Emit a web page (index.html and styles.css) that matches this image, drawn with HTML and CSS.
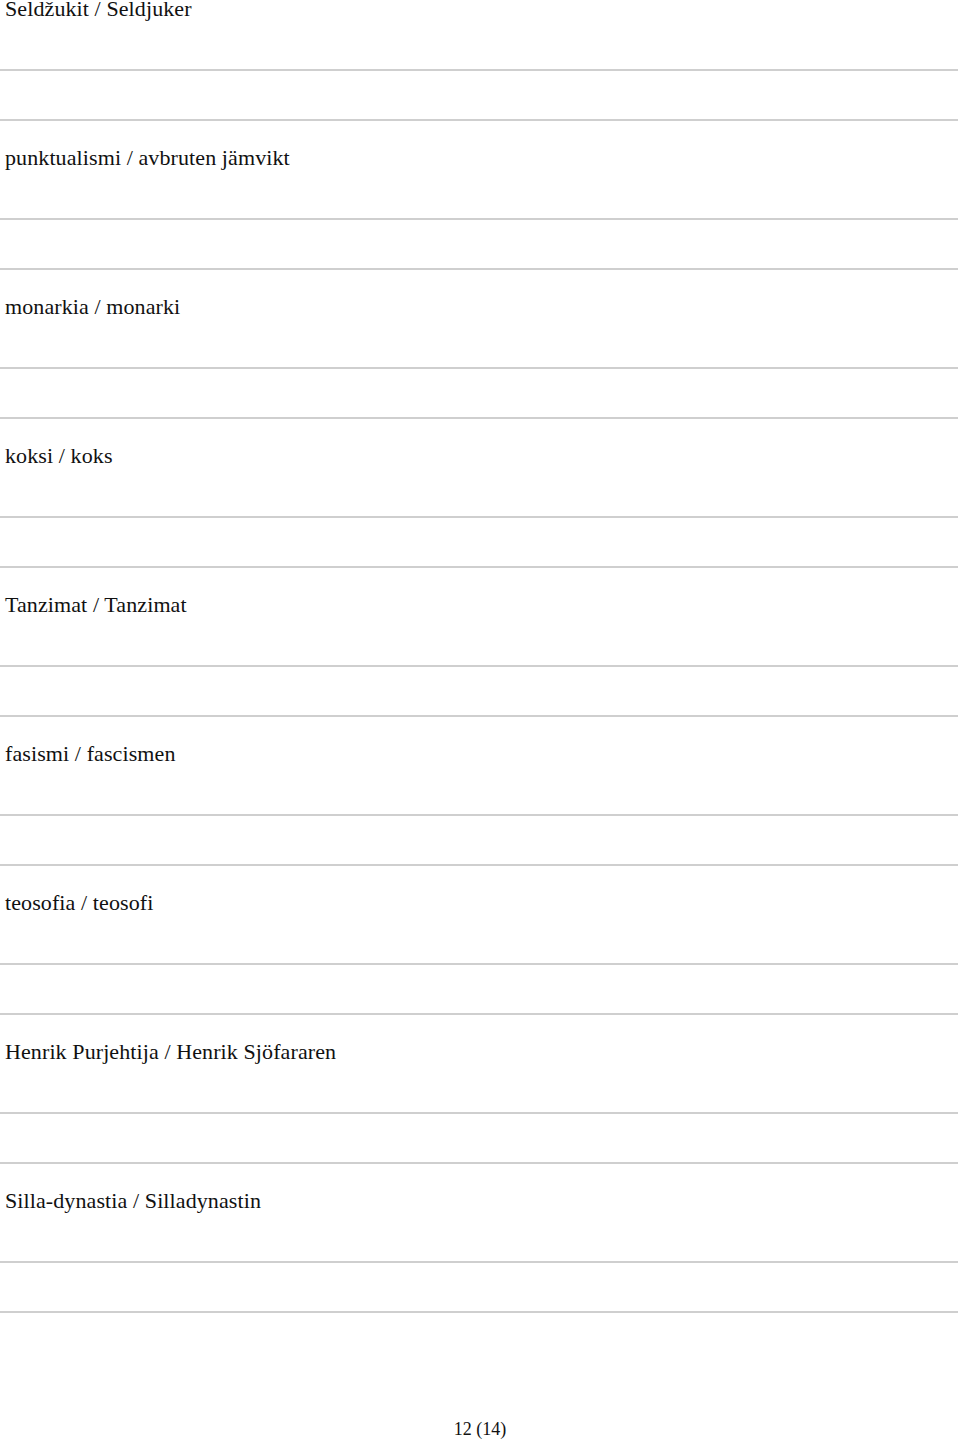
FILE: index.html
```html
<!DOCTYPE html>
<html lang="fi">
<head>
    <meta charset="UTF-8">
    <title>Sanasto 12 (14)</title>
    <link rel="stylesheet" href="styles.css">
</head>
<body>

<div class="page">
    <div class="entry">
        <p class="term">Seldžukit / Seldjuker</p>
        <div class="rule"></div>
        <div class="rule"></div>
    </div>
    <div class="entry">
        <p class="term">punktualismi / avbruten jämvikt</p>
        <div class="rule"></div>
        <div class="rule"></div>
    </div>
    <div class="entry">
        <p class="term">monarkia / monarki</p>
        <div class="rule"></div>
        <div class="rule"></div>
    </div>
    <div class="entry">
        <p class="term">koksi / koks</p>
        <div class="rule"></div>
        <div class="rule"></div>
    </div>
    <div class="entry">
        <p class="term">Tanzimat / Tanzimat</p>
        <div class="rule"></div>
        <div class="rule"></div>
    </div>
    <div class="entry">
        <p class="term">fasismi / fascismen</p>
        <div class="rule"></div>
        <div class="rule"></div>
    </div>
    <div class="entry">
        <p class="term">teosofia / teosofi</p>
        <div class="rule"></div>
        <div class="rule"></div>
    </div>
    <div class="entry">
        <p class="term">Henrik Purjehtija / Henrik Sjöfararen</p>
        <div class="rule"></div>
        <div class="rule"></div>
    </div>
    <div class="entry">
        <p class="term">Silla-dynastia / Silladynastin</p>
        <div class="rule"></div>
        <div class="rule"></div>
    </div>

    <p class="page-number">12 (14)</p>
</div>

</body>
</html>
```

FILE: styles.css
```css
body, html {
    margin: 0;
    padding: 0;
    background-color: #fff;
    color: #111;
    font-family: "Liberation Serif", "Times New Roman", serif;
}
.page {
    width: 960px;
    height: 1440px;
    display: flex;
    flex-direction: column;
}
.entry {
    height: 149px;
    display: flex;
    flex-direction: column;
}
.term {
    margin: 0 0 51px 5px;
    font-size: 22px;
    letter-spacing: 0.1px;
    line-height: 18px;
    height: 18px;
}
.rule {
    height: 2px;
    width: 958px;
    background-color: #cfcfcf;
}
.rule + .rule {
    margin-top: 48px;
}
.page-number {
    margin: auto 0 0 0;
    padding-bottom: 1px;
    text-align: center;
    font-size: 18px;
    line-height: 20px;
}
```
